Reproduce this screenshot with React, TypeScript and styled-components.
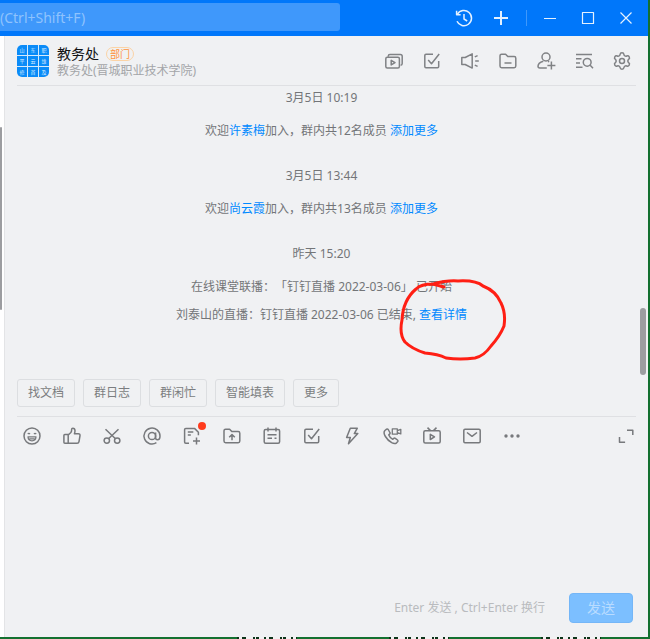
import React from "react";
import styled, { createGlobalStyle } from "styled-components";
import { Settings } from "lucide-react";

const GlobalStyle = createGlobalStyle`
  *, *::before, *::after { box-sizing: border-box; }
  body { margin: 0; background: #13702f; }
  body, button, input, textarea {
    font-family: "Noto Sans", "Noto Sans CJK SC", sans-serif;
    font-size: 12px;
    line-height: 20px;
    text-spacing-trim: space-all;
  }
`;

const Desktop = styled.div`
  display: flex;
  flex-direction: column;
  min-height: 100vh;
  padding-right: 2px;
  background: #13702f;
`;

const Window = styled.div`
  flex: 1;
  display: flex;
  flex-direction: column;
  background: #f0f1f3;
`;

const TitleBar = styled.header`
  display: flex;
  align-items: center;
  justify-content: space-between;
  height: 36px;
  padding-right: 12px;
  background: #0077fa;
`;

const Search = styled.input`
  flex: 0 1 340px;
  align-self: flex-start;
  min-width: 0;
  height: 28px;
  margin-top: 3px;
  padding: 0;
  border: 0;
  border-radius: 0 3px 3px 0;
  background: #3f98fb;
  color: #ffffff;
  font-size: 14px;
  outline: none;
  &::placeholder { color: #8fc3fd; opacity: 1; }
`;

const Group = styled.div<{ $gap: number }>`
  display: flex;
  align-items: center;
  gap: ${(p) => p.$gap}px;
`;

const Divider = styled.span`
  width: 1px;
  height: 16px;
  margin: 0 13px 0 15px;
  background: #3f98fb;
`;

const IconButton = styled.button<{ $tone: string }>`
  position: relative;
  display: block;
  flex: none;
  width: 20px;
  height: 20px;
  padding: 0;
  border: 0;
  background: none;
  color: ${(p) => p.$tone};
  cursor: pointer;
  svg { display: block; }
`;

const Dot = styled.span`
  position: absolute;
  top: -4px;
  right: -4px;
  width: 8px;
  height: 8px;
  border-radius: 50%;
  background: #ff3b1d;
`;

const Body = styled.div`
  flex: 1;
  display: flex;
`;

const Sidebar = styled.aside`
  flex: none;
  width: 5px;
  padding-top: 91px;
  border-right: 1px solid #e3e4e6;
  background: #ffffff;
`;

const Thumb = styled.div<{ $width: number; $height: number }>`
  width: ${(p) => p.$width}px;
  height: ${(p) => p.$height}px;
  border-radius: 3px;
  background: #9c9da0;
`;

const Chat = styled.main`
  flex: 1;
  min-width: 0;
  display: flex;
  flex-direction: column;
`;

const ChatHeader = styled.div`
  display: flex;
  align-items: center;
  gap: 8px;
  height: 50px;
  margin: 0 12px;
  padding-right: 4px;
  border-bottom: 1px solid #dfe0e3;
`;

const Names = styled.div`
  flex: 1;
  min-width: 0;
  padding-top: 3px;
  white-space: nowrap;
`;

const TitleRow = styled.div`
  display: flex;
  align-items: center;
  gap: 7px;
  height: 18px;
`;

const Title = styled.h1`
  margin: 0;
  font-size: 14px;
  line-height: 18px;
  font-weight: 400;
  color: #111214;
`;

const Tag = styled.span`
  height: 14px;
  padding: 0 3px;
  border: 1px solid #fbd3a5;
  border-radius: 7px;
  color: #ff943e;
  font-size: 10px;
  line-height: 12px;
`;

const Subtitle = styled.div`
  line-height: 16px;
  color: #a3a5a8;
`;

const Scroller = styled.section`
  display: flex;
  height: 286px;
`;

const Messages = styled.div`
  flex: 1;
  padding-top: 2px;
  color: #737578;
  text-align: center;
  white-space: nowrap;
`;

const Block = styled.div`
  margin-bottom: 25px;
`;

const Time = styled.time`
  display: block;
  margin-bottom: 13px;
`;

const Notice = styled.p`
  margin: 0 0 8px;
`;

const Link = styled.a`
  position: relative;
  color: #0089ff;
  text-decoration: none;
`;

const Scribble = styled.svg`
  position: absolute;
  left: -21px;
  top: -28px;
  pointer-events: none;
`;

const Track = styled.div`
  flex: none;
  width: 10px;
  padding: 222px 2px 0;
`;

const Chips = styled.div`
  display: flex;
  gap: 8px;
  margin: 7px 12px 9px;
`;

const Chip = styled.button`
  height: 28px;
  padding: 0 10px;
  border: 1px solid #dcdee1;
  border-radius: 3px;
  background: none;
  color: #7b7d80;
  cursor: pointer;
`;

const Toolbar = styled.div`
  display: flex;
  align-items: center;
  justify-content: space-between;
  height: 39px;
  margin: 0 12px;
  padding-left: 5px;
  border-top: 1px solid #dfe0e3;
`;

const Composer = styled.textarea`
  flex: 1;
  margin: 0 12px;
  padding: 4px;
  border: 0;
  background: none;
  resize: none;
  outline: none;
`;

const Footer = styled.footer`
  display: flex;
  align-items: center;
  justify-content: flex-end;
  gap: 24px;
  padding: 8px 15px 14px;
  color: #b9bbbe;
`;

const Send = styled.button`
  width: 64px;
  height: 30px;
  padding: 0;
  border: 1px solid #74b6f7;
  border-radius: 4px;
  background: #7cbfff;
  color: #b9dcff;
  font-size: 14px;
`;

const DesktopEdge = styled.div`
  display: flex;
  justify-content: flex-end;
  gap: 92px;
  height: 2px;
  padding-right: 47px;
  overflow: hidden;
  svg { display: block; }
`;

const icons: Record<string, React.ReactNode> = {
  history: (
    <>
      <path d="M3.4 6.2A7.6 7.6 0 1 1 3 13.2" />
      <path d="M2.6 2.8v4h4M10 6v5l3.2 2" />
    </>
  ),
  plus: <path d="M3 10h14M10 3v14" strokeWidth="2" />,
  minimize: <path d="M4 10.5h12" strokeWidth="1" />,
  maximize: <path d="M4.5 4.5h11v11h-11z" strokeWidth="1.2" />,
  close: <path d="M4.5 4.5l11 11M15.5 4.5l-11 11" strokeWidth="1.2" />,
  videos: (
    <>
      <rect x="1.8" y="6.2" width="13.6" height="10.8" rx="1.5" />
      <path d="M4.3 5.8V5q0-1.6 1.6-1.6h10.5q1.8 0 1.8 1.8v7.2q0 1.6-1.6 1.8M7.2 9.3v4.6l3.8-2.3z" />
    </>
  ),
  check: (
    <path d="M11 3.2H4q-1.2 0-1.2 1.2v11.2q0 1.2 1.2 1.2h11.5q1.2 0 1.2-1.2V10M6.2 9l3.3 3.7L17.2 3" />
  ),
  speaker: (
    <path d="M1.8 6.5h3.4l7-3.6v14.2l-7-3.6H1.8zM14.8 5.9l2.8-1.3M15.2 10h3.6M14.8 14.1l2.8 1.3" />
  ),
  folder: (
    <path d="M2 4.8q0-1.6 1.6-1.6h4l2.2 2.4h6.4q1.6 0 1.6 1.6v7.9q0 1.6-1.6 1.6H3.6Q2 16.7 2 15.1zM6.5 12h7" />
  ),
  addUser: (
    <>
      <circle cx="10" cy="6" r="4" />
      <path d="M7.3 10.3q-5.3 1.7-5.3 5 0 1.7 1.8 1.7h7M15.4 10.5v8M11.4 14.5h8M12 10.3l1.2.5" />
    </>
  ),
  find: (
    <>
      <path d="M2 3.5h16M2 7.8h5.5M2 12h4M2 16.2h6.5M16.2 14.2l2.8 3" />
      <circle cx="13.2" cy="11.3" r="3.9" />
    </>
  ),
  smile: (
    <>
      <circle cx="10" cy="10" r="8" />
      <path d="M6 10.8h8q-.2 4-4 4t-4-4zM5.8 8q1-1.4 2.2 0M12 8q1-1.4 2.2 0M7.3 12.8h5.4" strokeWidth="1.3" />
    </>
  ),
  thumb: (
    <path d="M2.8 8.6h3.4v8.6H2.8q-.9 0-.9-.9V9.5q0-.9.9-.9zM6.2 9l2.4-2.2q1-1 1-2.5V3.5q0-1.3 1.2-1.3 2.2 0 2.2 2.6 0 1.4-.6 2.9h3.9q2 0 1.7 2l-1 5.9q-.3 1.6-1.9 1.6H6.2" />
  ),
  cut: (
    <>
      <path d="M3.5 3.2l10 9.6M16.5 3.2l-10 9.6" />
      <circle cx="4.8" cy="14.6" r="2.7" />
      <circle cx="15.2" cy="14.6" r="2.7" />
    </>
  ),
  mention: (
    <>
      <circle cx="10" cy="10" r="3.6" />
      <path d="M13.6 6.5v5.3q0 2 1.9 2 2.5 0 2.5-3.8a8 8 0 1 0-3.6 6.7" />
    </>
  ),
  noteAdd: (
    <path d="M7 17.2H3.8q-1.2 0-1.2-1.2V3.6q0-1.2 1.2-1.2h8.7l3.9 3.8v3M5.8 6h5.5M5.8 9h3M14.5 11.5v7M11 15h7" />
  ),
  upload: (
    <path d="M2 4.8q0-1.6 1.6-1.6h4l2.2 2.4h6.4q1.6 0 1.6 1.6v7.9q0 1.6-1.6 1.6H3.6Q2 16.7 2 15.1zM10 14.2V9M7.2 11.3L10 8.6l2.8 2.7" />
  ),
  calendar: (
    <>
      <rect x="2.2" y="3.6" width="15.4" height="13.6" rx="1.5" />
      <path d="M6 1.5v4M14 1.5v4M5.5 8.8h9M5.5 12.3h4.5M12.5 12.3h2" />
    </>
  ),
  bolt: <path d="M8.3 2.2h7l-3 5.4h3.5L6.5 17.8l1.8-6.3H4.6z" />,
  call: (
    <>
      <path d="M4.6 3.2L2.9 4.5Q1 6.5 3.4 10.5t6.3 6.2q3.1 1.6 4.9.1l1.2-1.3q.5-.8-.3-1.5l-2.2-1.7q-.8-.5-1.5.1l-1 .9q-2.9-1.5-4-4.4l1-1q.6-.6.1-1.4L6.2 3.5q-.7-.9-1.6-.3z" />
      <path d="M10.3 2.8h5v5.4h-5zM15.3 4.7l3.5-1.4v4.6l-3.5-1.3" strokeWidth="1.3" />
    </>
  ),
  tv: (
    <>
      <rect x="1.8" y="4.8" width="16.4" height="12.2" rx="1.5" />
      <path d="M5.5 1.6l3 3M14.5 1.6l-3 3M8.3 8.3v5.2l4.2-2.6z" />
    </>
  ),
  mail: (
    <>
      <rect x="1.8" y="3.2" width="16.4" height="13.6" rx="1.2" />
      <path d="M5 6.5l5 3.8 5-3.8" />
    </>
  ),
  more: (
    <g fill="currentColor" stroke="none">
      <circle cx="4" cy="10" r="1.7" />
      <circle cx="10" cy="10" r="1.7" />
      <circle cx="16" cy="10" r="1.7" />
    </g>
  ),
  expand: <path d="M11 4.2h5.8V9M3.5 11v5.2h5.6" />,
};

const Glyph = ({ name }: { name: string }) =>
  name === "settings" ? (
    <Settings size={20} strokeWidth={1.8} />
  ) : (
    <svg
      width="20"
      height="20"
      viewBox="0 0 20 20"
      fill="none"
      stroke="currentColor"
      strokeWidth="1.5"
      strokeLinejoin="round"
      aria-hidden="true"
    >
      {icons[name]}
    </svg>
  );

type Item = { icon: string; label: string; dot?: boolean };

const IconRow = ({ items, tone, gap }: { items: Item[]; tone: string; gap: number }) => (
  <Group $gap={gap}>
    {items.map((item) => (
      <IconButton key={item.icon} type="button" aria-label={item.label} $tone={tone}>
        <Glyph name={item.icon} />
        {item.dot && <Dot />}
      </IconButton>
    ))}
  </Group>
);

const leadActions: Item[] = [
  { icon: "history", label: "历史" },
  { icon: "plus", label: "新建" },
];
const windowActions: Item[] = [
  { icon: "minimize", label: "最小化" },
  { icon: "maximize", label: "最大化" },
  { icon: "close", label: "关闭" },
];
const chatActions: Item[] = [
  { icon: "videos", label: "直播" },
  { icon: "check", label: "待办" },
  { icon: "speaker", label: "公告" },
  { icon: "folder", label: "文件" },
  { icon: "addUser", label: "添加成员" },
  { icon: "find", label: "查找" },
  { icon: "settings", label: "设置" },
];
const tools: Item[] = [
  { icon: "smile", label: "表情" },
  { icon: "thumb", label: "点赞" },
  { icon: "cut", label: "截图" },
  { icon: "mention", label: "提及" },
  { icon: "noteAdd", label: "文档", dot: true },
  { icon: "upload", label: "上传" },
  { icon: "calendar", label: "日程" },
  { icon: "check", label: "任务" },
  { icon: "bolt", label: "快捷" },
  { icon: "call", label: "通话" },
  { icon: "tv", label: "视频" },
  { icon: "mail", label: "邮件" },
  { icon: "more", label: "更多工具" },
];

const Logo = () => (
  <svg width="32" height="32" viewBox="0 0 32 32" aria-hidden="true">
    <rect width="32" height="32" rx="5" fill="#0a8bf8" />
    <path d="M10.5 0v32M21.5 0v32M0 10.5h32M0 21.5h32" stroke="#d5eafc" strokeWidth="1" />
    <g fill="#d9edff" fontSize="5" textAnchor="middle" fontFamily="Noto Sans CJK SC, sans-serif">
      {["山", "东", "职", "平", "云", "维", "修", "首", "及"].map((c, i) => (
        <text key={c} x={5 + (i % 3) * 11} y={7 + Math.floor(i / 3) * 11}>
          {c}
        </text>
      ))}
    </g>
  </svg>
);

const welcomes = [
  { time: "3月5日 10:19", name: "许素梅", count: 12 },
  { time: "3月5日 13:44", name: "尚云霞", count: 13 },
];

export default function App() {
  return (
    <>
      <GlobalStyle />
      <Desktop>
        <Window>
          <TitleBar>
            <Search aria-label="搜索" placeholder="(Ctrl+Shift+F)" />
            <Group $gap={0}>
              <IconRow items={leadActions} tone="#e4f1ff" gap={17} />
              <Divider />
              <IconRow items={windowActions} tone="#e4f1ff" gap={18} />
            </Group>
          </TitleBar>
          <Body>
            <Sidebar>
              <Thumb $width={2} $height={183} />
            </Sidebar>
            <Chat>
              <ChatHeader>
                <Logo />
                <Names>
                  <TitleRow>
                    <Title>教务处</Title>
                    <Tag>部门</Tag>
                  </TitleRow>
                  <Subtitle>教务处(晋城职业技术学院)</Subtitle>
                </Names>
                <IconRow items={chatActions} tone="#808285" gap={18} />
              </ChatHeader>
              <Scroller>
                <Messages>
                  {welcomes.map((w) => (
                    <Block key={w.time}>
                      <Time>{w.time}</Time>
                      <Notice>
                        欢迎<Link href="#member">{w.name}</Link>加入，群内共{w.count}名成员{" "}
                        <Link href="#add">添加更多</Link>
                      </Notice>
                    </Block>
                  ))}
                  <Block>
                    <Time>昨天 15:20</Time>
                    <Notice>在线课堂联播：「钉钉直播 2022-03-06」 已开始</Notice>
                    <Notice>
                      刘泰山的直播：钉钉直播 2022-03-06 已结束,{" "}
                      <Link href="#detail">
                        查看详情
                        <Scribble width="112" height="84" viewBox="0 0 112 84" aria-hidden="true">
                          <path
                            d="M46 9L35 6Q50 2 60 3Q78 2 85 8Q98 13 103 25Q108 35 106 48Q102 58 93 68Q86 78 77 80Q62 82 48 80Q40 76 27 75Q14 71 7 64Q1 56 4 42Q5 22 18 11Q23 6 35 6"
                            fill="none"
                            stroke="#ff1f14"
                            strokeWidth="3"
                            strokeLinecap="round"
                            strokeLinejoin="round"
                          />
                        </Scribble>
                      </Link>
                    </Notice>
                  </Block>
                </Messages>
                <Track>
                  <Thumb $width={6} $height={67} />
                </Track>
              </Scroller>
              <Chips>
                {["找文档", "群日志", "群闲忙", "智能填表", "更多"].map((label) => (
                  <Chip key={label} type="button">
                    {label}
                  </Chip>
                ))}
              </Chips>
              <Toolbar>
                <IconRow items={tools} tone="#77797c" gap={20} />
                <IconRow items={[{ icon: "expand", label: "展开" }]} tone="#77797c" gap={0} />
              </Toolbar>
              <Composer aria-label="消息" />
              <Footer>
                <span>Enter 发送 , Ctrl+Enter 换行</span>
                <Send type="button">发送</Send>
              </Footer>
            </Chat>
          </Body>
        </Window>
        <DesktopEdge>
          {[0, 1, 2].map((i) => (
            <svg key={i} width="60" height="2" aria-hidden="true">
              <path d="M0 1h60" stroke="#0c3318" strokeWidth="2" />
              <path d="M2 1h58" stroke="#f2f2f2" strokeWidth="2" strokeDasharray="3 4 7 2 1 3 5 2" />
            </svg>
          ))}
        </DesktopEdge>
      </Desktop>
    </>
  );
}
